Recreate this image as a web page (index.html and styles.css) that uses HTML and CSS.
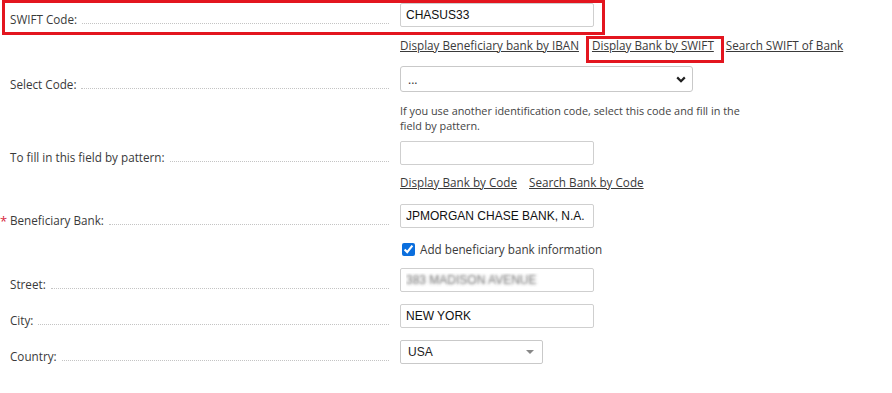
FILE: index.html
```html
<!DOCTYPE html>
<html lang="en">
<head>
    <meta charset="UTF-8">
    <meta name="viewport" content="width=device-width, initial-scale=1.0">
    <title>Beneficiary Bank</title>
    <link rel="stylesheet" href="styles.css">
</head>
<body>
    <div class="bank-form">
        <!-- SWIFT code row, marked in red -->
        <div class="form-row marked-row">
            <div class="form-label"><span class="label-text">SWIFT Code:</span><span class="leader"></span></div>
            <div class="form-field"><input type="text" class="text-input" value="CHASUS33"></div>
        </div>

        <div class="field-extra links">
            <a href="#" class="link">Display Beneficiary bank by IBAN</a><a href="#" class="link marked-link">Display Bank by SWIFT</a><a href="#" class="link">Search SWIFT of Bank</a>
        </div>

        <div class="form-row row-select">
            <div class="form-label"><span class="mark"></span><span class="label-text">Select Code:</span><span class="leader"></span></div>
            <div class="form-field">
                <select class="code-select">
                    <option>...</option>
                </select>
            </div>
        </div>

        <div class="field-extra help-text">
            If you use another identification code, select this code and fill in the<br>
            field by pattern.
        </div>

        <div class="form-row row-pattern">
            <div class="form-label"><span class="mark"></span><span class="label-text">To fill in this field by pattern:</span><span class="leader"></span></div>
            <div class="form-field"><input type="text" class="text-input"></div>
        </div>

        <div class="field-extra links links-code">
            <a href="#" class="link">Display Bank by Code</a><a href="#" class="link">Search Bank by Code</a>
        </div>

        <div class="form-row row-bank">
            <div class="form-label"><span class="mark required">*</span><span class="label-text">Beneficiary Bank:</span><span class="leader"></span></div>
            <div class="form-field"><input type="text" class="text-input" value="JPMORGAN CHASE BANK, N.A."></div>
        </div>

        <div class="field-extra check-row">
            <label class="check-label"><input type="checkbox" class="check" checked>Add beneficiary bank information</label>
        </div>

        <div class="form-row row-street">
            <div class="form-label"><span class="mark"></span><span class="label-text">Street:</span><span class="leader"></span></div>
            <div class="form-field"><input type="text" class="text-input blurred" value="383 MADISON AVENUE"></div>
        </div>

        <div class="form-row row-city">
            <div class="form-label"><span class="mark"></span><span class="label-text">City:</span><span class="leader"></span></div>
            <div class="form-field"><input type="text" class="text-input" value="NEW YORK"></div>
        </div>

        <div class="form-row row-country">
            <div class="form-label"><span class="mark"></span><span class="label-text">Country:</span><span class="leader"></span></div>
            <div class="form-field">
                <select class="country-select">
                    <option>USA</option>
                </select>
            </div>
        </div>
    </div>
</body>
</html>
```

FILE: styles.css
```css
* {
    margin: 0;
    padding: 0;
    box-sizing: border-box;
}

body {
    background-color: #fff;
    color: #3a3a3a;
    font-family: 'Open Sans', sans-serif;
    font-size: 11.7px;
    line-height: 16px;
}

.bank-form {
    width: 892px;
    padding-top: 3px;
}

.form-row {
    display: grid;
    grid-template-columns: 389px 1fr;
    column-gap: 11px;
    align-items: end;
}

.marked-row {
    width: 597px;
    margin-left: 5px;
    padding-left: 5px;
    padding-bottom: 5px;
    grid-template-columns: 379px 1fr;
    outline: 3px solid #e3151f;
}

.form-label {
    display: flex;
    align-items: flex-end;
    white-space: nowrap;
}

.mark {
    width: 10px;
    flex-shrink: 0;
    color: #d7263d;
    font-size: 13px;
    line-height: 10px;
    align-self: center;
    padding-top: 2px;
}

.leader {
    flex: 1;
    margin-left: 5px;
    margin-bottom: 3px;
    border-bottom: 1px dotted #c4c4c4;
}

.text-input {
    display: block;
    width: 194px;
    height: 24px;
    padding: 0 5px;
    border: 1px solid #cfcfcf;
    border-radius: 2px;
    font-family: 'Liberation Sans', Arial, sans-serif;
    font-size: 12px;
    color: #111;
    background: #fff;
    outline: none;
}

.blurred {
    color: transparent;
    text-shadow: 0 0 3px rgba(70, 70, 70, 0.8);
}

.field-extra {
    padding-left: 400px;
}

.links {
    height: 16px;
    margin-top: 5px;
    white-space: nowrap;
}

.link {
    color: #3a3a3a;
    text-decoration: underline;
    margin-right: 12px;
}

.marked-link {
    display: inline-block;
    padding: 0 9px 9px 5px;
    margin-left: -4px;
    margin-right: 3px;
    outline: 3px solid #e3151f;
    outline-offset: -2px;
}

.row-select {
    margin-top: 13px;
}

.code-select {
    display: block;
    width: 293px;
    height: 26px;
    padding: 0 24px 0 7px;
    border: 1px solid #c9c9c9;
    border-radius: 3px;
    font-family: 'Open Sans', sans-serif;
    font-size: 12px;
    color: #333;
    background: #fff url("data:image/svg+xml,%3Csvg xmlns='http://www.w3.org/2000/svg' width='10' height='7' viewBox='0 0 10 7'%3E%3Cpath d='M1.2 1.4 5 5.2 8.8 1.4' fill='none' stroke='%23222' stroke-width='2.2'/%3E%3C/svg%3E") no-repeat right 6px center;
    appearance: none;
    -webkit-appearance: none;
}

.help-text {
    margin-top: 11px;
    font-size: 10.85px;
    line-height: 15px;
    color: #444;
}

.row-pattern {
    margin-top: 8px;
}

.links-code {
    margin-top: 9px;
}

.row-bank {
    margin-top: 14px;
}

.check-row {
    margin-top: 13px;
}

.check-label {
    display: flex;
    align-items: center;
    color: #3a3a3a;
}

.check {
    width: 13px;
    height: 13px;
    margin: 0 5px 0 2px;
    accent-color: #0b6fde;
}

.row-street {
    margin-top: 11px;
}

.row-city,
.row-country {
    margin-top: 12px;
}

.country-select {
    display: block;
    width: 143px;
    height: 24px;
    padding: 0 20px 0 7px;
    border: 1px solid #c9c9c9;
    border-radius: 2px;
    font-family: 'Liberation Sans', Arial, sans-serif;
    font-size: 12px;
    color: #222;
    background: #fff url("data:image/svg+xml,%3Csvg xmlns='http://www.w3.org/2000/svg' width='8' height='4' viewBox='0 0 8 4'%3E%3Cpath d='M0 0h8L4 4z' fill='%23888'/%3E%3C/svg%3E") no-repeat right 8px center;
    appearance: none;
    -webkit-appearance: none;
}
```
